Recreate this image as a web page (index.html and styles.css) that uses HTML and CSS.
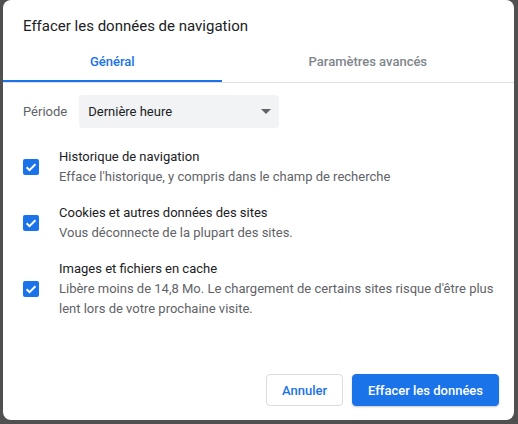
FILE: index.html
```html
<!DOCTYPE html>
<html lang="fr">
<head>
<meta charset="utf-8">
<title>Effacer les données de navigation</title>
<link rel="stylesheet" href="styles.css">
</head>
<body>
<div class="dialog">
  <h1 class="title">Effacer les données de navigation</h1>
  <div class="tabs">
    <div class="tab tab-active">Général</div>
    <div class="tab">Paramètres avancés</div>
  </div>
  <div class="content">
    <div class="period">
      <span class="period-label">Période</span>
      <div class="select">
        <span>Dernière heure</span>
        <svg class="arrow" width="10" height="5" viewBox="0 0 10 5"><path d="M0 0h10L5 5z" fill="#5f6368"/></svg>
      </div>
    </div>
    <div class="options">
      <div class="option">
        <svg class="check" width="16" height="16" viewBox="0 0 16 16"><rect width="16" height="16" rx="2" fill="#1a73e8"/><path d="M3.6 8.2l2.9 2.9 5.9-5.9" fill="none" stroke="#fff" stroke-width="2"/></svg>
        <div class="option-text">
          <div class="option-title">Historique de navigation</div>
          <div class="option-desc">Efface l'historique, y compris dans le champ de recherche</div>
        </div>
      </div>
      <div class="option">
        <svg class="check" width="16" height="16" viewBox="0 0 16 16"><rect width="16" height="16" rx="2" fill="#1a73e8"/><path d="M3.6 8.2l2.9 2.9 5.9-5.9" fill="none" stroke="#fff" stroke-width="2"/></svg>
        <div class="option-text">
          <div class="option-title">Cookies et autres données des sites</div>
          <div class="option-desc">Vous déconnecte de la plupart des sites.</div>
        </div>
      </div>
      <div class="option">
        <svg class="check" width="16" height="16" viewBox="0 0 16 16"><rect width="16" height="16" rx="2" fill="#1a73e8"/><path d="M3.6 8.2l2.9 2.9 5.9-5.9" fill="none" stroke="#fff" stroke-width="2"/></svg>
        <div class="option-text">
          <div class="option-title">Images et fichiers en cache</div>
          <div class="option-desc">Libère moins de 14,8 Mo. Le chargement de certains sites risque d'être plus lent lors de votre prochaine visite.</div>
        </div>
      </div>
    </div>
  </div>
  <div class="footer">
    <button class="btn btn-cancel">Annuler</button>
    <button class="btn btn-primary">Effacer les données</button>
  </div>
</div>
</body>
</html>
```
FILE: styles.css
```css
html, body {
  margin: 0;
  padding: 0;
}
body {
  background: #505050;
  width: 518px;
  height: 424px;
  overflow: hidden;
  font-family: Roboto, "Liberation Sans", sans-serif;
  font-size: 13px;
  color: #202124;
}
.dialog {
  box-sizing: border-box;
  margin-left: 3px;
  width: 511px;
  height: 420px;
  background: #fff;
  border-radius: 8px;
  display: flex;
  flex-direction: column;
  padding-bottom: 14px;
}
.title {
  margin: 0;
  padding: 16px 20px 0;
  height: 42px;
  box-sizing: border-box;
  font-size: 15px;
  font-weight: 400;
  line-height: 20px;
  color: #202124;
}
.tabs {
  display: flex;
  border-bottom: 1px solid #e0e0e0;
}
.tab {
  flex: 1 1 auto;
  height: 40px;
  box-sizing: border-box;
  display: flex;
  align-items: center;
  justify-content: center;
  font-weight: 500;
  color: #80868b;
  border-bottom: 2px solid transparent;
  padding-top: 1px;
}
.tab-active {
  color: #1a73e8;
  border-bottom-color: #1a73e8;
}
.content {
  padding: 12px 16px 0 20px;
}
.period {
  display: flex;
  align-items: center;
  gap: 12px;
}
.period-label {
  color: #5f6368;
}
.select {
  width: 200px;
  height: 33px;
  box-sizing: border-box;
  background: #f1f3f4;
  border-radius: 4px;
  display: flex;
  align-items: center;
  justify-content: space-between;
  padding: 0 8px 0 9px;
  color: #202124;
}
.options {
  display: flex;
  flex-direction: column;
  gap: 16px;
  margin-top: 19px;
}
.option {
  display: flex;
  align-items: center;
  gap: 20px;
}
.check {
  flex: none;
}
.option-text {
  line-height: 20px;
}
.option-desc {
  color: #5f6368;
}
.footer {
  margin-top: auto;
  display: flex;
  justify-content: flex-end;
  gap: 9px;
  padding-right: 15px;
}
.btn {
  height: 32px;
  box-sizing: border-box;
  border-radius: 4px;
  font-family: Roboto, "Liberation Sans", sans-serif;
  font-size: 13px;
  font-weight: 500;
  padding: 0 15px;
  cursor: pointer;
}
.btn-cancel {
  background: #fff;
  border: 1px solid #dadce0;
  color: #1a73e8;
}
.btn-primary {
  background: #1a73e8;
  border: 1px solid #1a73e8;
  color: #fff;
  box-shadow: 0 1px 2px rgba(60, 64, 67, 0.3);
}
```
